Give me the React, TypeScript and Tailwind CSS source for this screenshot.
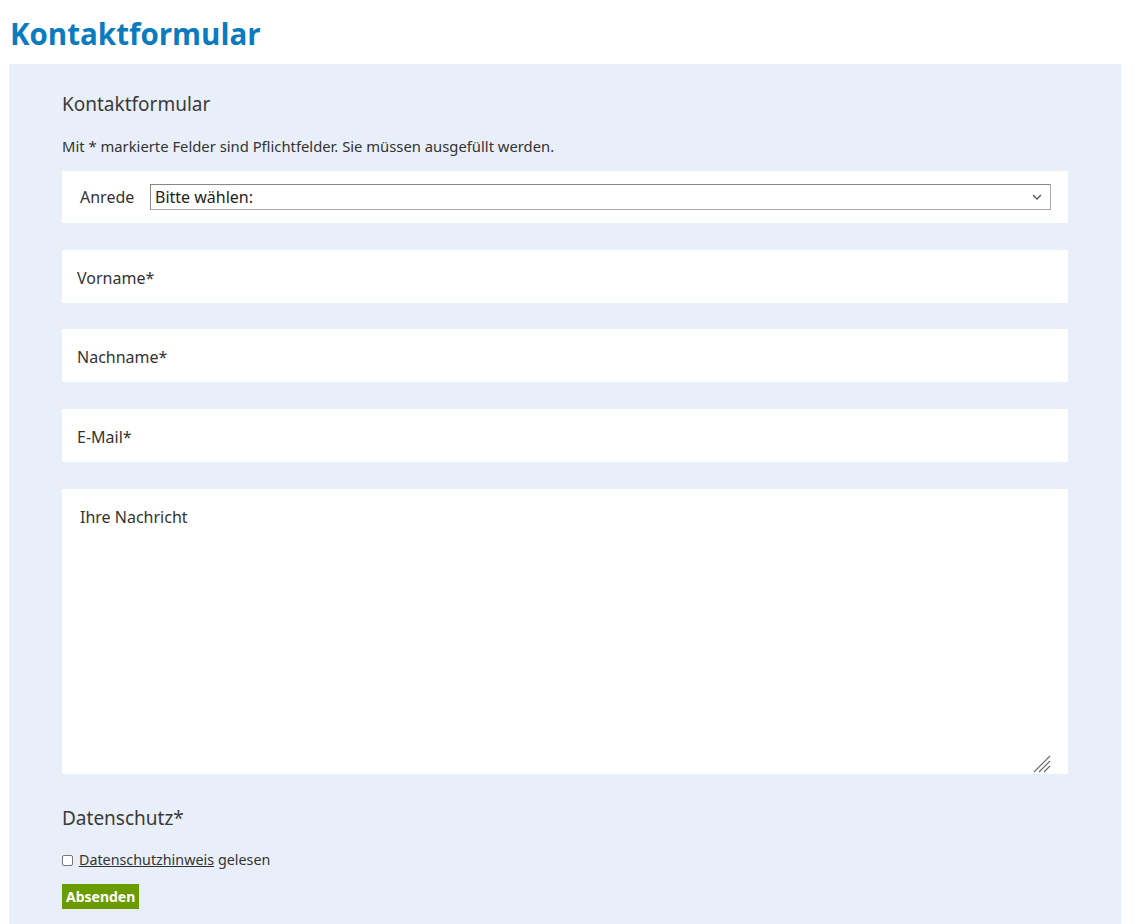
import React from "react";

const font = { fontFamily: '"Noto Sans", "Open Sans", sans-serif' };

export default function App() {
  return (
    <div className="bg-white min-h-[924px] text-[#333]" style={font}>
      <h1
        className="pl-[10px] pt-[14px] pb-[10px] text-[29.5px] leading-[40px] font-bold text-[#0a7bbf]"
        style={{ fontFamily: '"Open Sans", "Noto Sans", sans-serif' }}
      >
        Kontaktformular
      </h1>
      <div className="ml-[9px] mr-[15px] bg-[#e9eff8] px-[53px] pt-[26px] pb-[20px] min-h-[860px]">
        <h2 className="text-[19px] leading-[28px] text-[#3a3a3a]">Kontaktformular</h2>
        <p className="mt-[18px] text-[14.8px] leading-[20px] text-[#333]">
          Mit * markierte Felder sind Pflichtfelder. Sie müssen ausgefüllt werden.
        </p>
        <div className="mt-[15px] bg-white h-[52px] flex items-center pl-[18px] pr-[17px]">
          <span className="text-[16px] text-[#333] w-[70px]">Anrede</span>
          <div className="flex-1 h-[26px] border border-[#aaa] border-t-[#888] border-l-[#888] flex items-center justify-between pl-[4px] pr-[8px]">
            <span className="text-[16px] text-[#222]">Bitte wählen:</span>
            <svg width="10" height="6" viewBox="0 0 10 6" fill="none">
              <path d="M1 1l4 4 4-4" stroke="#555" strokeWidth="1.3" />
            </svg>
          </div>
        </div>
        <div className="mt-[27px] bg-white h-[53px] flex items-center pl-[15px] pt-[2px] text-[16px] text-[#333]">
          Vorname*
        </div>
        <div className="mt-[26px] bg-white h-[53px] flex items-center pl-[15px] pt-[2px] text-[16px] text-[#333]">
          Nachname*
        </div>
        <div className="mt-[27px] bg-white h-[53px] flex items-center pl-[15px] pt-[2px] text-[16px] text-[#333]">
          E-Mail*
        </div>
        <div className="relative mt-[27px] bg-white h-[285px] pl-[18px] pt-[16px] text-[16px] text-[#333]">
          Ihre Nachricht
          <svg className="absolute right-[17px] bottom-[1px]" width="18" height="18" viewBox="0 0 18 18">
            <path d="M17 1L1 17M17 6L6 17M17 11L11 17" stroke="#666" strokeWidth="1.1" />
          </svg>
        </div>
        <h3 className="mt-[31px] text-[19px] leading-[26px] text-[#3a3a3a]">Datenschutz*</h3>
        <div className="mt-[19px] flex items-center text-[14.3px] leading-[20px]">
          <span className="inline-block w-[11px] h-[11px] border border-[#767676] rounded-[2px] bg-white mr-[6px]" />
          <span className="underline">Datenschutzhinweis</span>
          <span className="ml-[4px]">gelesen</span>
        </div>
        <div className="mt-[14px]">
          <button
            className="block bg-[#6a9c00] text-white font-bold text-[14px] h-[25px] px-[4px] leading-[25px]"
            style={font}
          >
            Absenden
          </button>
        </div>
      </div>
    </div>
  );
}
